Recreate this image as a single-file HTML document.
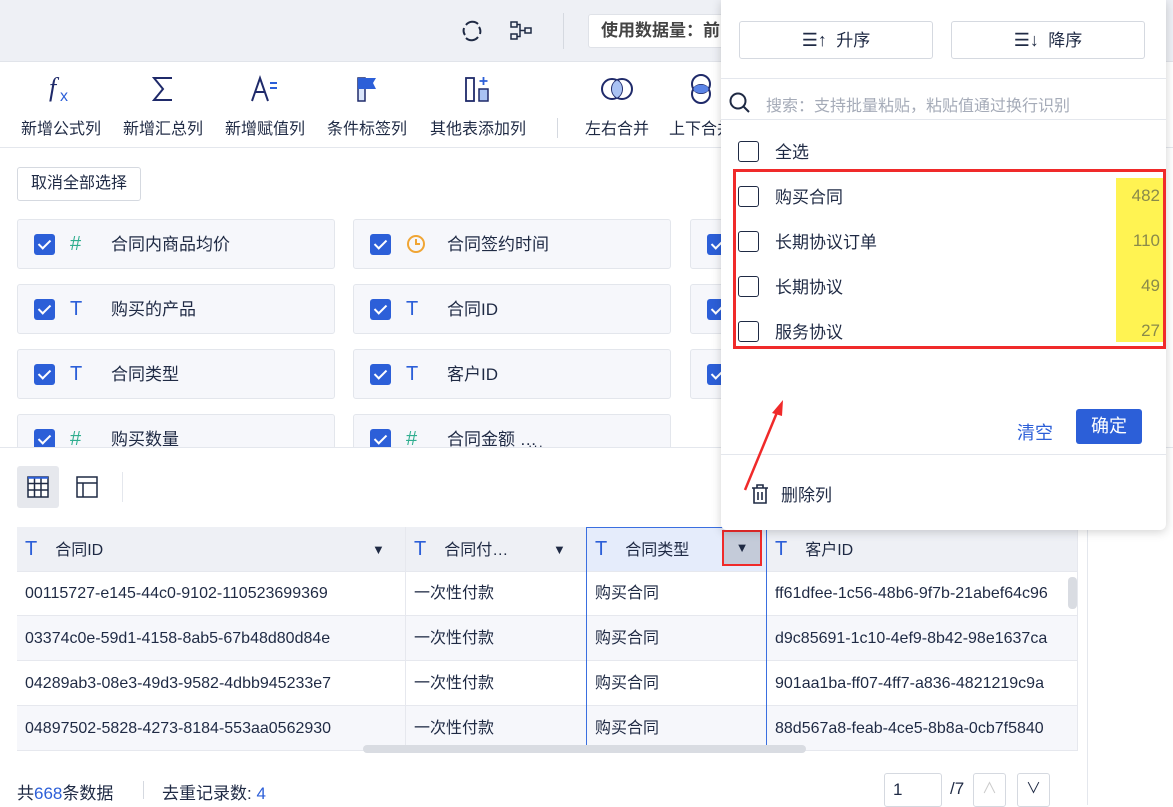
<!DOCTYPE html>
<html><head><meta charset="utf-8">
<style>
*{box-sizing:border-box;margin:0;padding:0}
body{width:1173px;height:805px;overflow:hidden;background:#fff;font-family:"Liberation Sans","Noto Sans CJK SC",sans-serif;color:#1f2a44;font-size:16px;position:relative}
.a{position:absolute}
.top{left:0;top:0;width:1173px;height:62px;background:#eef0f5;border-bottom:1px solid #e1e4ea}
.tb{top:62px;left:0;width:1173px;height:86px;border-bottom:1px solid #e4e7ed}
.ti{position:absolute;top:68px;text-align:center;font-size:16px;width:110px}
.ti svg{display:block;margin:6px auto 11px}
.btn{border:1px solid #d5d9e0;border-radius:3px;background:#fff}
.card{position:absolute;width:318px;height:50px;background:#f6f7fb;border:1px solid #e3e6ec;border-radius:3px}
.cb{position:absolute;left:16px;top:14px;width:21px;height:21px;background:#2c5fd8;border-radius:3px}
.cb:after{content:"";position:absolute;left:7px;top:3px;width:5px;height:10px;border:solid #fff;border-width:0 2.5px 2.5px 0;transform:rotate(45deg)}
.ic{position:absolute;left:52px;top:12px;font-size:20px;line-height:24px}
.ct{position:absolute;left:93px;top:10px;font-size:17px}
.cell{position:absolute;height:45px;line-height:45px;font-size:16px;padding-left:8px;white-space:nowrap;overflow:hidden;border-right:1px solid #e6e8ee;border-bottom:1px solid #e6e8ee}
.hd{background:#eef0f5;height:45px}
.T{color:#2c5fd8;font-size:20px;margin:0 18px 0 8px}
.chk{position:absolute;left:17px;width:21px;height:21px;border:1.5px solid #1f2a44;border-radius:3px}
.it{position:absolute;left:54px;font-size:17px}
.num{position:absolute;right:6px;font-size:17px;color:#8a8a4a}
</style></head><body>
<div class="a top"></div>
<svg class="a" style="left:461px;top:20px" width="22" height="22" viewBox="0 0 22 22"><path d="M5 5A8 8 0 0 1 17 4M17 17A8 8 0 0 1 5 18M3 8A8 8 0 0 0 4 15M19 14A8 8 0 0 0 18 7" stroke="#1f2a44" stroke-width="2" fill="none"/></svg>
<svg class="a" style="left:510px;top:21px" width="22" height="20"><rect x="1" y="1" width="6" height="5" fill="none" stroke="#1f2a44" stroke-width="1.5"/><rect x="1" y="13" width="6" height="5" fill="none" stroke="#1f2a44" stroke-width="1.5"/><rect x="15" y="7" width="6" height="5" fill="none" stroke="#1f2a44" stroke-width="1.5"/><path d="M7 3.5H10V15.5H7M10 9.5H15" stroke="#1f2a44" stroke-width="1.5" fill="none"/></svg>
<div class="a" style="left:563px;top:13px;width:1px;height:36px;background:#d5d9e0"></div>
<div class="a btn" style="left:588px;top:14px;width:200px;height:34px;border-color:#dfe2e8;font-weight:bold;font-size:17px;line-height:32px;padding-left:12px;color:#444">使用数据量：前</div>

<div class="a tb"></div>
<div class="ti" style="left:6px"><svg width="30" height="30"><text x="3" y="22" font-size="26" font-style="italic" fill="#1f2a6a" font-family="Liberation Serif">f</text><text x="14" y="27" font-size="16" fill="#2c5fd8">x</text></svg>新增公式列</div>
<div class="ti" style="left:108px"><svg width="30" height="30"><path d="M24 4H6L15 15L6 26H24" stroke="#1f2a6a" stroke-width="2" fill="none"/></svg>新增汇总列</div>
<div class="ti" style="left:210px"><svg width="30" height="30"><path d="M2 27L10 4L18 27M5 18H15" stroke="#1f2a6a" stroke-width="2" fill="none"/><path d="M20 9H27M20 14H27" stroke="#2c5fd8" stroke-width="2"/></svg>新增赋值列</div>
<div class="ti" style="left:312px"><svg width="30" height="30"><rect x="6" y="4" width="7" height="23" fill="#dbe6fb" stroke="#1f2a6a" stroke-width="1.5"/><path d="M6 4H24L21 9L24 15H6Z" fill="#2c5fd8"/></svg>条件标签列</div>
<div class="ti" style="left:423px"><svg width="30" height="30"><rect x="3" y="4" width="8" height="23" fill="none" stroke="#1f2a6a" stroke-width="1.8"/><rect x="16" y="15" width="9" height="12" fill="#a9c2f3" stroke="#1f2a6a" stroke-width="1.5"/><path d="M20.5 3V11M16.5 7H24.5" stroke="#2c5fd8" stroke-width="1.8"/></svg>其他表添加列</div>
<div class="a" style="left:557px;top:118px;width:1px;height:20px;background:#d5d9e0"></div>
<div class="ti" style="left:562px"><svg width="34" height="30"><circle cx="12" cy="15" r="10" fill="none" stroke="#1f2a6a" stroke-width="2"/><circle cx="22" cy="15" r="10" fill="none" stroke="#1f2a6a" stroke-width="2"/><path d="M17 6.3A10 10 0 0 1 17 23.7A10 10 0 0 1 17 6.3Z" fill="#a9c2f3"/></svg>左右合并</div>
<div class="ti" style="left:646px;top:68px"><svg width="30" height="30" style="margin-bottom:11px"><circle cx="15" cy="10" r="9" fill="none" stroke="#1f2a6a" stroke-width="2"/><circle cx="15" cy="20" r="9" fill="none" stroke="#1f2a6a" stroke-width="2"/><ellipse cx="15" cy="15" rx="7.5" ry="4.2" fill="#5b84e6"/></svg>上下合并</div>

<div class="a btn" style="left:17px;top:167px;width:124px;height:34px;line-height:32px;text-align:center;font-size:16px">取消全部选择</div>

<div class="card" style="left:17px;top:219px"><div class="cb"></div><div class="ic" style="color:#2fae8f">#</div><div class="ct">合同内商品均价</div></div>
<div class="card" style="left:353px;top:219px"><div class="cb"></div><svg class="ic" style="top:14px" width="20" height="20"><circle cx="10" cy="10" r="8" fill="none" stroke="#f0a534" stroke-width="2"/><path d="M10 5V10H14" stroke="#f0a534" stroke-width="2" fill="none"/></svg><div class="ct">合同签约时间</div></div>
<div class="card" style="left:690px;top:219px"><div class="cb"></div></div>
<div class="card" style="left:17px;top:284px"><div class="cb"></div><div class="ic" style="color:#2c5fd8">T</div><div class="ct">购买的产品</div></div>
<div class="card" style="left:353px;top:284px"><div class="cb"></div><div class="ic" style="color:#2c5fd8">T</div><div class="ct">合同ID</div></div>
<div class="card" style="left:690px;top:284px"><div class="cb"></div></div>
<div class="card" style="left:17px;top:349px"><div class="cb"></div><div class="ic" style="color:#2c5fd8">T</div><div class="ct">合同类型</div></div>
<div class="card" style="left:353px;top:349px"><div class="cb"></div><div class="ic" style="color:#2c5fd8">T</div><div class="ct">客户ID</div></div>
<div class="card" style="left:690px;top:349px"><div class="cb"></div></div>
<div class="a" style="left:0;top:414px;width:720px;height:33px;overflow:hidden">
<div class="card" style="left:17px;top:0"><div class="cb"></div><div class="ic" style="color:#2fae8f">#</div><div class="ct">购买数量</div></div>
<div class="card" style="left:353px;top:0"><div class="cb"></div><div class="ic" style="color:#2fae8f">#</div><div class="ct">合同金额 …</div></div>
</div>
<div class="a" style="left:0;top:447px;width:1173px;height:1px;background:#e4e7ed"></div>
<div class="a" style="left:528px;top:438px;font-size:13px;letter-spacing:1px">···</div>

<div class="a" style="left:17px;top:466px;width:42px;height:42px;background:#e6e8ed;border-radius:3px"></div>
<svg class="a" style="left:27px;top:476px" width="22" height="22"><rect x="1" y="1" width="20" height="20" fill="#fff" stroke="#1f2a44" stroke-width="1.5"/><path d="M1 7.5H21M1 14H21M7.5 1V21M14 1V21" stroke="#1f2a44" stroke-width="1.5"/><path d="M1 1.8H21" stroke="#2c5fd8" stroke-width="2"/></svg>
<svg class="a" style="left:76px;top:476px" width="22" height="22"><rect x="1" y="1" width="20" height="20" fill="none" stroke="#1f2a44" stroke-width="1.5"/><path d="M1 7H21M7 7V21" stroke="#1f2a44" stroke-width="1.5"/></svg>
<div class="a" style="left:122px;top:472px;width:1px;height:30px;background:#e4e7ed"></div>

<div class="cell hd" style="left:17px;top:527px;width:389px;padding:0"><span class="T">T</span>合同ID<span style="position:absolute;left:355px;font-size:13px">▼</span></div>
<div class="cell hd" style="left:406px;top:527px;width:181px;padding:0"><span class="T">T</span>合同付…<span style="position:absolute;left:147px;font-size:13px">▼</span></div>
<div class="cell hd" style="left:587px;top:527px;width:180px;padding:0;background:#e5ecfb"><span class="T">T</span>合同类型</div>
<div class="a" style="left:722px;top:530px;width:40px;height:36px;background:#c4cbd9;border:2px solid #f02a2a;text-align:center;line-height:32px;font-size:13px;z-index:2">▼</div>
<div class="cell hd" style="left:767px;top:527px;width:311px;padding:0"><span class="T">T</span>客户ID</div>

<div class="cell" style="left:17px;top:571px;width:389px">00115727-e145-44c0-9102-110523699369</div>
<div class="cell" style="left:406px;top:571px;width:181px">一次性付款</div>
<div class="cell" style="left:587px;top:571px;width:180px">购买合同</div>
<div class="cell" style="left:767px;top:571px;width:311px">ff61dfee-1c56-48b6-9f7b-21abef64c96</div>
<div class="cell" style="left:17px;top:616px;width:389px;background:#f6f7fb">03374c0e-59d1-4158-8ab5-67b48d80d84e</div>
<div class="cell" style="left:406px;top:616px;width:181px;background:#f6f7fb">一次性付款</div>
<div class="cell" style="left:587px;top:616px;width:180px;background:#f6f7fb">购买合同</div>
<div class="cell" style="left:767px;top:616px;width:311px;background:#f6f7fb">d9c85691-1c10-4ef9-8b42-98e1637ca</div>
<div class="cell" style="left:17px;top:661px;width:389px">04289ab3-08e3-49d3-9582-4dbb945233e7</div>
<div class="cell" style="left:406px;top:661px;width:181px">一次性付款</div>
<div class="cell" style="left:587px;top:661px;width:180px">购买合同</div>
<div class="cell" style="left:767px;top:661px;width:311px">901aa1ba-ff07-4ff7-a836-4821219c9a</div>
<div class="cell" style="left:17px;top:706px;width:389px;background:#f6f7fb">04897502-5828-4273-8184-553aa0562930</div>
<div class="cell" style="left:406px;top:706px;width:181px;background:#f6f7fb">一次性付款</div>
<div class="cell" style="left:587px;top:706px;width:180px;background:#f6f7fb">购买合同</div>
<div class="cell" style="left:767px;top:706px;width:311px;background:#f6f7fb">88d567a8-feab-4ce5-8b8a-0cb7f5840</div>
<div class="a" style="left:586px;top:527px;width:1px;height:224px;background:#3a6fe0;z-index:1"></div>
<div class="a" style="left:766px;top:527px;width:1px;height:224px;background:#3a6fe0;z-index:1"></div>
<div class="a" style="left:586px;top:527px;width:181px;height:1px;background:#3a6fe0;z-index:1"></div>
<div class="a" style="left:363px;top:745px;width:443px;height:8px;background:#d9dce2;border-radius:4px;z-index:2"></div>
<div class="a" style="left:1068px;top:577px;width:9px;height:32px;background:#d9dce2;border-radius:4px"></div>
<div class="a" style="left:1087px;top:380px;width:1px;height:425px;background:#e4e7ed"></div>

<div class="a" style="left:17px;top:779px;font-size:17px">共<span style="color:#2c5fd8">668</span>条数据</div>
<div class="a" style="left:143px;top:781px;width:1px;height:18px;background:#d5d9e0"></div>
<div class="a" style="left:162px;top:779px;font-size:17px">去重记录数: <span style="color:#2c5fd8">4</span></div>
<div class="a btn" style="left:884px;top:773px;width:58px;height:34px;padding:6px 0 0 8px;font-size:17px">1</div>
<div class="a" style="left:950px;top:779px;font-size:17px">/7</div>
<div class="a btn" style="left:973px;top:773px;width:33px;height:34px;color:#ccc;text-align:center;font-size:15px;line-height:30px">∧</div>
<div class="a btn" style="left:1017px;top:773px;width:33px;height:34px;text-align:center;font-size:15px;line-height:30px">∨</div>

<!-- popup -->
<div class="a" style="left:721px;top:0;width:445px;height:530px;background:#fff;border-radius:0 0 6px 6px;box-shadow:0 2px 10px rgba(0,0,0,.18);z-index:5">
 <div class="a btn" style="left:18px;top:21px;width:194px;height:38px;text-align:center;line-height:36px;font-size:17px"><b style="font-weight:normal;font-size:18px">☰↑</b>&nbsp; 升序</div>
 <div class="a btn" style="left:230px;top:21px;width:194px;height:38px;text-align:center;line-height:36px;font-size:17px"><b style="font-weight:normal;font-size:18px">☰↓</b>&nbsp; 降序</div>
 <div class="a" style="left:0;top:78px;width:445px;height:1px;background:#e4e7ed"></div>
 <svg class="a" style="left:8px;top:92px" width="22" height="22"><circle cx="9" cy="9" r="7.5" fill="none" stroke="#1f2a44" stroke-width="2"/><path d="M14.5 14.5L20 20" stroke="#1f2a44" stroke-width="2"/></svg>
 <div class="a" style="left:45px;top:92px;font-size:16px;color:#a5abb8">搜索：支持批量粘贴，粘贴值通过换行识别</div>
 <div class="a" style="left:0;top:119px;width:445px;height:1px;background:#e4e7ed"></div>
 <div class="chk" style="top:141px"></div><div class="it" style="top:138px">全选</div>
 <div class="a" style="left:395px;top:178px;width:47px;height:164px;background:#fff352"></div>
 <div class="chk" style="top:186px"></div><div class="it" style="top:183px">购买合同</div><div class="num" style="top:186px">482</div>
 <div class="chk" style="top:231px"></div><div class="it" style="top:228px">长期协议订单</div><div class="num" style="top:231px">110</div>
 <div class="chk" style="top:276px"></div><div class="it" style="top:273px">长期协议</div><div class="num" style="top:276px">49</div>
 <div class="chk" style="top:321px"></div><div class="it" style="top:318px">服务协议</div><div class="num" style="top:321px">27</div>
 <div class="a" style="left:12px;top:169px;width:433px;height:180px;border:3px solid #f02a2a"></div>
 <div class="a" style="left:296px;top:419px;font-size:18px;color:#2c5fd8">清空</div>
 <div class="a" style="left:355px;top:415px;width:66px;height:35px;background:#2c5fd8;border-radius:3px;color:#fff;text-align:center;line-height:35px;font-size:18px;top:414px;transform:translateY(-5px)">确定</div>
 <div class="a" style="left:0;top:454px;width:445px;height:1px;background:#e4e7ed"></div>
 <svg class="a" style="left:30px;top:483px" width="18" height="22"><path d="M1 5H17M6 5V2H12V5M3 5V20H15V5M7 9V17M11 9V17" stroke="#1f2a44" stroke-width="1.6" fill="none"/></svg>
 <div class="a" style="left:60px;top:481px;font-size:17px">删除列</div>
 <svg class="a" style="left:0;top:380px" width="80" height="120"><path d="M24 110L57 30" stroke="#f02a2a" stroke-width="2.5"/><path d="M62 20L51 33L61 36Z" fill="#f02a2a"/></svg>
</div>
</body></html>
